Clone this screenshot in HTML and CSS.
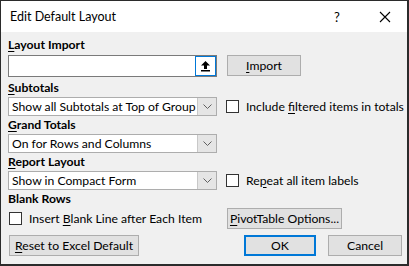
FILE: index.html
```html
<!DOCTYPE html>
<html lang="en">
<head>
  <meta charset="UTF-8" />
  <title>Edit Default Layout</title>
  <link rel="stylesheet" href="styles.css">
</head>
<body>
  <div class="dialog">
    <div class="titlebar">
      <span class="title">Edit Default Layout</span>
      <span class="help">?</span>
      <svg class="close" width="12" height="12" viewBox="0 0 12 12">
        <path d="M1 1 L11 11 M11 1 L1 11" stroke="#000" stroke-width="1.1" fill="none"/>
      </svg>
    </div>

    <div class="content">
      <div class="label"><u>L</u>ayout Import</div>
      <div class="row first">
        <div class="filebox">
          <span class="upload">
            <svg width="11" height="12" viewBox="0 0 11 12">
              <path d="M5.5 1 L10 5.5 L7 5.5 L7 9 L4 9 L4 5.5 L1 5.5 Z" fill="#000"/>
              <rect x="1" y="10" width="9" height="1.5" fill="#000"/>
            </svg>
          </span>
        </div>
        <button class="btn import"><u>I</u>mport</button>
      </div>

      <div class="label"><u>S</u>ubtotals</div>
      <div class="row">
        <div class="select">
          <span class="value">Show all Subtotals at Top of Group</span>
          <span class="arrow"><svg width="9" height="5" viewBox="0 0 9 5"><path d="M0.5 0.5 L4.5 4.5 L8.5 0.5" stroke="#606060" fill="none"/></svg></span>
        </div>
        <label class="check"><span class="box"></span><span>Include <u>f</u>iltered items in totals</span></label>
      </div>

      <div class="label"><u>G</u>rand Totals</div>
      <div class="row">
        <div class="select">
          <span class="value">On for Rows and Columns</span>
          <span class="arrow"><svg width="9" height="5" viewBox="0 0 9 5"><path d="M0.5 0.5 L4.5 4.5 L8.5 0.5" stroke="#606060" fill="none"/></svg></span>
        </div>
      </div>

      <div class="label"><u>R</u>eport Layout</div>
      <div class="row">
        <div class="select">
          <span class="value">Show in Compact Form</span>
          <span class="arrow"><svg width="9" height="5" viewBox="0 0 9 5"><path d="M0.5 0.5 L4.5 4.5 L8.5 0.5" stroke="#606060" fill="none"/></svg></span>
        </div>
        <label class="check"><span class="box"></span><span>Re<u>p</u>eat all item labels</span></label>
      </div>

      <div class="label">Blank Rows</div>
      <div class="row blank">
        <label class="check left"><span class="box"></span><span>Insert <u>B</u>lank Line after Each Item</span></label>
        <button class="btn pivot"><u>P</u>ivotTable Options...</button>
      </div>

      <div class="row footer">
        <button class="btn reset"><u>R</u>eset to Excel Default</button>
        <button class="btn ok">OK</button>
        <button class="btn cancel">Cancel</button>
      </div>
    </div>
  </div>
</body>
</html>
```

FILE: styles.css
```css
body {
  margin: 0;
  font-family: Lato, "Segoe UI", sans-serif;
  font-size: 12.2px;
  color: #000;
  background: #fff;
  white-space: nowrap;
}
u {
  text-decoration: underline;
  text-underline-offset: 2px;
}
.dialog {
  width: 406px;
  height: 263px;
  border: 1px solid #2b2b2b;
  border-right-width: 2px;
  border-bottom-width: 2px;
  background: #f0f0f0;
  display: flex;
  flex-direction: column;
  overflow: hidden;
}
.titlebar {
  flex: none;
  height: 31px;
  background: #fff;
  display: flex;
  align-items: center;
  padding-left: 9px;
}
.title {
  flex: 1;
  font-size: 12.5px;
}
.help {
  width: 14px;
  margin-right: 31px;
  font-size: 13px;
}
.close {
  margin-right: 16px;
}
.content {
  padding: 5px 0 0 7px;
}
.label {
  font-weight: bold;
  height: 16px;
  line-height: 16px;
}
.row {
  display: flex;
  align-items: center;
  gap: 9px;
  margin-bottom: 1px;
}
.row.first {
  margin-bottom: 3px;
}
.filebox {
  width: 207px;
  height: 20px;
  margin-top: 2px;
  background: #fff;
  border: 1px solid #7a7a7a;
  display: flex;
  justify-content: flex-end;
}
.upload {
  width: 19px;
  height: 18px;
  border: 1px solid #0078d7;
  display: flex;
  align-items: center;
  justify-content: center;
}
.btn {
  font-family: inherit;
  font-size: 12.2px;
  color: #000;
  background: #e1e1e1;
  border: 1px solid #adadad;
  padding: 0;
  height: 21px;
}
.import {
  width: 74px;
  margin-left: 1px;
}
.select {
  width: 207px;
  height: 17px;
  background: #fff;
  border: 1px solid #adadad;
  display: flex;
  align-items: center;
  margin-top: 1px;
}
.value {
  flex: 1;
  padding-left: 3px;
}
.arrow {
  width: 18px;
  height: 17px;
  background: #e5e5e5;
  border-left: 1px solid #c8c8c8;
  display: flex;
  align-items: center;
  justify-content: center;
}
.check {
  display: flex;
  align-items: center;
  gap: 7px;
}
.box {
  width: 11px;
  height: 11px;
  border: 1px solid #333;
  background: #fff;
}
.blank {
  margin-top: 1px;
}
.check.left {
  width: 209px;
  margin-left: 1px;
}
.pivot {
  width: 115px;
}
.footer {
  margin-top: 6px;
  gap: 0;
}
.reset {
  width: 130px;
  margin-left: 1px;
}
.ok {
  width: 72px;
  margin-left: 105px;
  border: 2px solid #0078d7;
}
.cancel {
  width: 74px;
  margin-left: 12px;
}
```
